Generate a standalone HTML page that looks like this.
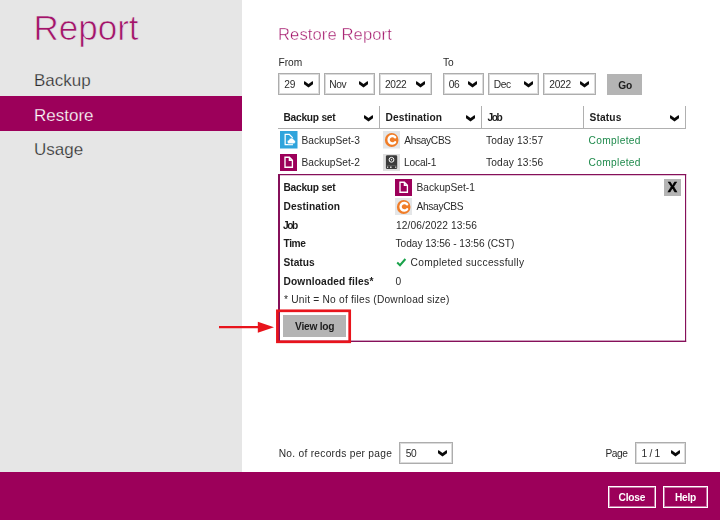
<!DOCTYPE html>
<html><head><meta charset="utf-8">
<style>
html,body{margin:0;padding:0;}
body{transform:translateZ(0);width:720px;height:520px;position:relative;overflow:hidden;background:#fff;font-family:"Liberation Sans",sans-serif;color:#2a2a2a;font-size:10.2px;}
.abs{position:absolute;white-space:nowrap;}
#side{left:0;top:0;width:242px;height:472px;background:#e6e6e6;}
#foot{left:0;top:472px;width:720px;height:48px;background:#9c005a;}
#title{font-size:35px;color:#a3146a;line-height:40px;-webkit-text-stroke:0.7px #e6e6e6;}
.nav{font-size:17px;color:#2e2e2e;line-height:20px;-webkit-text-stroke:0.25px #e6e6e6;}
#active{left:0;top:96px;width:242px;height:35px;background:#9c005a;}
.sel{border:1px solid #adadad;box-shadow:inset 0 0 0 1px #dbdbdb;box-sizing:border-box;height:22px;line-height:22px;letter-spacing:-0.3px;}
.sel svg{position:absolute;right:4.3px;top:7.3px;}
.b{font-weight:bold;font-size:10.2px;letter-spacing:-0.25px;color:#1c1c1c;}
.btn{background:#b4b4b4;box-sizing:border-box;text-align:center;}
.btn span,.fb span{display:block;transform:translateZ(0);}
.th{top:106px;height:23px;line-height:24.3px;border-bottom:1px solid #b0b0b0;border-right:1px solid #b0b0b0;box-sizing:border-box;padding-left:5.5px;}
.td{line-height:22px;height:22px;}
.l{line-height:14px;}
.fb{border:1px solid #fff;box-shadow:inset 0 0 0 1px rgba(255,255,255,0.45);box-sizing:border-box;color:#fff;text-align:center;height:22px;line-height:22px;top:486px;}
</style></head><body>
<div id="side" class="abs"></div>
<div id="foot" class="abs"></div>
<div id="title" class="abs" style="left:33.5px;top:7.8px">Report</div>
<div class="abs nav" style="left:34px;top:71px;">Backup</div>
<div id="active" class="abs"></div>
<div class="abs nav" style="left:34px;top:105.5px;color:#fff;-webkit-text-stroke:0.25px #9c005a">Restore</div>
<div class="abs nav" style="left:34px;top:140px;">Usage</div>

<div class="abs" style="left:278px;top:24.5px;font-size:16.6px;color:#a3146a;line-height:20px;-webkit-text-stroke:0.4px #fff;letter-spacing:0.1px">Restore Report</div>
<div class="abs " style="left:278.5px;top:55.8px;line-height:13px">From</div>
<div class="abs " style="left:443px;top:55.8px;line-height:13px">To</div>

<div class="abs sel" style="left:278px;top:73px;width:41.5px;padding-left:5.3px">29<svg width="11" height="7" viewBox="0 0 11 7"><path d="M1 0.4L1.7 0.3L5.5 2.9L9.3 0.3L10 0.4V3.3L5.5 6.5L1 3.3Z" fill="#0a0a0a"/></svg></div>
<div class="abs sel" style="left:324px;top:73px;width:50.5px;padding-left:4.2px">Nov<svg width="11" height="7" viewBox="0 0 11 7"><path d="M1 0.4L1.7 0.3L5.5 2.9L9.3 0.3L10 0.4V3.3L5.5 6.5L1 3.3Z" fill="#0a0a0a"/></svg></div>
<div class="abs sel" style="left:379px;top:73px;width:52.5px;padding-left:5px">2022<svg width="11" height="7" viewBox="0 0 11 7"><path d="M1 0.4L1.7 0.3L5.5 2.9L9.3 0.3L10 0.4V3.3L5.5 6.5L1 3.3Z" fill="#0a0a0a"/></svg></div>
<div class="abs sel" style="left:443px;top:73px;width:40.5px;padding-left:4.7px">06<svg width="11" height="7" viewBox="0 0 11 7"><path d="M1 0.4L1.7 0.3L5.5 2.9L9.3 0.3L10 0.4V3.3L5.5 6.5L1 3.3Z" fill="#0a0a0a"/></svg></div>
<div class="abs sel" style="left:488px;top:73px;width:51px;padding-left:4.7px">Dec<svg width="11" height="7" viewBox="0 0 11 7"><path d="M1 0.4L1.7 0.3L5.5 2.9L9.3 0.3L10 0.4V3.3L5.5 6.5L1 3.3Z" fill="#0a0a0a"/></svg></div>
<div class="abs sel" style="left:543px;top:73px;width:52.5px;padding-left:5.3px">2022<svg width="11" height="7" viewBox="0 0 11 7"><path d="M1 0.4L1.7 0.3L5.5 2.9L9.3 0.3L10 0.4V3.3L5.5 6.5L1 3.3Z" fill="#0a0a0a"/></svg></div>
<div class="abs btn b" style="left:607px;top:74px;width:35.3px;height:21.2px;line-height:23px;padding-left:1px"><span>Go</span></div>

<div class="abs th b" style="left:278px;width:102px">Backup set<svg class="abs" style="right:4.9px;top:9.1px" width="11" height="7" viewBox="0 0 11 7"><path d="M1 0.4L1.7 0.3L5.5 2.9L9.3 0.3L10 0.4V3.3L5.5 6.5L1 3.3Z" fill="#0a0a0a"/></svg></div>
<div class="abs th b" style="left:380px;width:102px;letter-spacing:0.1px">Destination<svg class="abs" style="right:4.9px;top:9.1px" width="11" height="7" viewBox="0 0 11 7"><path d="M1 0.4L1.7 0.3L5.5 2.9L9.3 0.3L10 0.4V3.3L5.5 6.5L1 3.3Z" fill="#0a0a0a"/></svg></div>
<div class="abs th b" style="left:482px;width:102px;letter-spacing:-1.4px">Job</div>
<div class="abs th b" style="left:584px;width:102px;letter-spacing:0.15px">Status<svg class="abs" style="right:4.9px;top:9.1px" width="11" height="7" viewBox="0 0 11 7"><path d="M1 0.4L1.7 0.3L5.5 2.9L9.3 0.3L10 0.4V3.3L5.5 6.5L1 3.3Z" fill="#0a0a0a"/></svg></div>

<svg class="abs" style="left:280px;top:131.3px" width="17.5" height="17.5" viewBox="0 0 17 17" preserveAspectRatio="none"><rect width="17" height="17" fill="#2fa4dc"/><path d="M5 3.3h4l3 3v7h-7z" fill="none" stroke="#fff" stroke-width="1.2"/><path d="M8.3 12.4a1.9 1.9 0 0 1 .3-3.7a2.6 2.6 0 0 1 4.9-.3a2.1 2.1 0 0 1 .2 4z" fill="#fff" stroke="#2fa4dc" stroke-width="0.6"/></svg>
<div class="abs td" style="left:301.5px;top:129.7px;">BackupSet-3</div>
<svg class="abs" style="left:383px;top:131.3px" width="17" height="17.5" viewBox="0 0 17 17" preserveAspectRatio="none"><rect width="17" height="17" fill="#e4e6e8"/><circle cx="8.7" cy="8.7" r="6.8" fill="#f07d28"/><path d="M12.1 6.1A3.7 3.7 0 1 0 12.1 10.9" fill="none" stroke="#fff" stroke-width="2.4" stroke-linecap="round"/></svg>
<div class="abs td" style="left:404.2px;top:129.7px;letter-spacing:-0.33px;">AhsayCBS</div>
<div class="abs td" style="left:486px;top:129.7px;letter-spacing:0.17px;">Today 13:57</div>
<div class="abs td" style="left:588.5px;top:129.7px;color:#1f8a4c;letter-spacing:0.34px;">Completed</div>
<svg class="abs" style="left:280px;top:154px" width="17" height="17"><rect width="17" height="17" fill="#9c005a"/><path d="M5 3.2h4.4l3 3v7h-7.4z M9.4 3.2v3h3" fill="none" stroke="#fff" stroke-width="1.35"/></svg>
<div class="abs td" style="left:301.5px;top:151.8px;">BackupSet-2</div>
<svg class="abs" style="left:383px;top:154px" width="17" height="17"><rect width="17" height="17" fill="#e0e0e0"/><rect x="2.9" y="1.3" width="11.3" height="13.7" rx="1.3" fill="#3c3c3c"/><circle cx="8.5" cy="5.8" r="2.4" fill="none" stroke="#fff" stroke-width="1"/><circle cx="8.5" cy="5.8" r="0.7" fill="#fff"/><rect x="3.6" y="11" width="9.9" height="0.6" fill="#666"/><rect x="4.1" y="12.6" width="1.1" height="1.2" fill="#fff"/><rect x="7" y="12.6" width="1.6" height="1.2" fill="#fff"/><rect x="12.2" y="12.6" width="1.1" height="1.2" fill="#fff"/></svg>
<div class="abs td" style="left:404px;top:151.8px;letter-spacing:-0.15px;">Local-1</div>
<div class="abs td" style="left:486px;top:151.8px;letter-spacing:0.17px;">Today 13:56</div>
<div class="abs td" style="left:588.5px;top:151.8px;color:#1f8a4c;letter-spacing:0.34px;">Completed</div>

<svg class="abs" style="left:277px;top:173px" width="411" height="170" fill="#86105a"><rect x="1" y="1" width="2" height="168"/><rect x="1" y="1" width="408.15" height="1.25"/><rect x="408" y="1" width="1.15" height="168"/><rect x="1" y="167.6" width="408.15" height="1.4"/></svg>
<div class="abs l b" style="left:283.5px;top:181.2px;">Backup set</div>
<div class="abs l b" style="left:283.5px;top:200px;letter-spacing:0.1px;">Destination</div>
<div class="abs l b" style="left:283px;top:218.6px;letter-spacing:-1.4px;">Job</div>
<div class="abs l b" style="left:283.5px;top:236.8px;letter-spacing:-0.4px;">Time</div>
<div class="abs l b" style="left:283.5px;top:255.8px;letter-spacing:0px;">Status</div>
<div class="abs l b" style="left:283.5px;top:274.5px;letter-spacing:0.14px;">Downloaded files*</div>
<div class="abs l" style="left:284px;top:292.8px;letter-spacing:0.22px;">* Unit = No of files (Download size)</div>
<svg class="abs" style="left:395px;top:178.5px" width="17" height="17"><rect width="17" height="17" fill="#9c005a"/><path d="M5 3.2h4.4l3 3v7h-7.4z M9.4 3.2v3h3" fill="none" stroke="#fff" stroke-width="1.35"/></svg>
<div class="abs l" style="left:416.5px;top:181.2px;">BackupSet-1</div>
<svg class="abs" style="left:395px;top:197.5px" width="17" height="17.5" viewBox="0 0 17 17" preserveAspectRatio="none"><rect width="17" height="17" fill="#e4e6e8"/><circle cx="8.7" cy="8.7" r="6.8" fill="#f07d28"/><path d="M12.1 6.1A3.7 3.7 0 1 0 12.1 10.9" fill="none" stroke="#fff" stroke-width="2.4" stroke-linecap="round"/></svg>
<div class="abs l" style="left:416.5px;top:200px;letter-spacing:-0.33px;">AhsayCBS</div>
<div class="abs l" style="left:396px;top:218.6px;letter-spacing:0.1px;">12/06/2022 13:56</div>
<div class="abs l" style="left:395.5px;top:236.8px;letter-spacing:-0.05px;">Today 13:56 - 13:56 (CST)</div>
<svg class="abs" style="left:396px;top:257.2px" width="11" height="10"><path d="M1.2 5.6L4 8.2L9.4 2" fill="none" stroke="#19a24a" stroke-width="2"/></svg>
<div class="abs l" style="left:410.5px;top:255.8px;letter-spacing:0.31px;">Completed successfully</div>
<div class="abs l" style="left:395.5px;top:274.5px;">0</div>
<div class="abs btn" style="left:664px;top:179px;width:17px;height:17px;line-height:17px;font-size:14px;font-weight:bold;color:#000;-webkit-text-stroke:0.5px #000"><span>X</span></div>

<div class="abs btn b" style="left:283px;top:315px;width:63.3px;height:22px;line-height:24.4px"><span>View log</span></div>
<svg class="abs" style="left:274px;top:307px" width="80" height="38"><rect x="3.4" y="3.8" width="72.3" height="31" fill="none" stroke="#e8141c" stroke-width="2.7"/></svg>
<svg class="abs" style="left:215px;top:318px" width="62" height="18"><path d="M4 9.2H46" stroke="#e8141c" stroke-width="2.3"/><path d="M42.8 3.7L59 9.2L42.8 14.8Z" fill="#e8141c"/></svg>

<div class="abs " style="left:278.7px;top:447px;line-height:13px;letter-spacing:0.28px;">No. of records per page</div>
<div class="abs sel" style="left:399px;top:442px;width:54px;padding-left:5.7px">50<svg width="11" height="7" viewBox="0 0 11 7"><path d="M1 0.4L1.7 0.3L5.5 2.9L9.3 0.3L10 0.4V3.3L5.5 6.5L1 3.3Z" fill="#0a0a0a"/></svg></div>
<div class="abs " style="left:605.5px;top:447px;line-height:13px;letter-spacing:-0.5px;">Page</div>
<div class="abs sel" style="left:635px;top:442px;width:51px;padding-left:5.5px">1 / 1<svg width="11" height="7" viewBox="0 0 11 7"><path d="M1 0.4L1.7 0.3L5.5 2.9L9.3 0.3L10 0.4V3.3L5.5 6.5L1 3.3Z" fill="#0a0a0a"/></svg></div>

<div class="abs fb b" style="left:607.7px;width:48.3px"><span>Close</span></div>
<div class="abs fb b" style="left:663px;width:45px"><span>Help</span></div>
</body></html>
